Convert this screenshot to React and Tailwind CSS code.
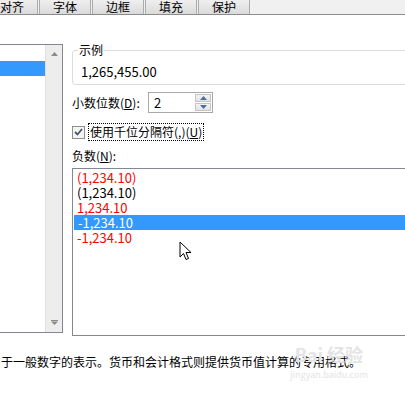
import React from "react";

const tabs = ["对齐", "字体", "边框", "填充", "保护"];

const negatives = [
  { text: "(1,234.10)", color: "text-[#ff0000]" },
  { text: "(1,234.10)", color: "text-black" },
  { text: "1,234.10", color: "text-[#ff0000]" },
  { text: "-1,234.10", color: "text-white", selected: true },
  { text: "-1,234.10", color: "text-[#ff0000]" },
];

function Cursor() {
  return (
    <svg
      className="absolute left-[179px] top-[241px]"
      width="14"
      height="21"
      viewBox="0 0 14 21"
    >
      <path
        d="M1 1 L1 16 L4.5 12.5 L7 18.5 L9.5 17.5 L7 11.5 L12 11.5 Z"
        fill="#fff"
        stroke="#000"
        strokeWidth="1"
        strokeLinejoin="miter"
      />
    </svg>
  );
}

function SpinBox() {
  return (
    <div className="flex h-[21px] w-[65px] items-center border border-[#a8a8a8] bg-white">
      <span className="flex-1 pl-[5px] text-[13px] leading-none">2</span>
      <div className="mr-[1px] flex h-[17px] w-[16px] flex-col gap-[1px]">
        <div className="flex flex-1 items-center justify-center border border-[#c4c4c4] bg-gradient-to-b from-[#f4f4f4] to-[#e4e4e4]">
          <svg width="7" height="4" viewBox="0 0 7 4">
            <path d="M0 4 L3.5 0 L7 4 Z" fill="#4a6f9c" />
          </svg>
        </div>
        <div className="flex flex-1 items-center justify-center border border-[#c4c4c4] bg-gradient-to-b from-[#f4f4f4] to-[#e4e4e4]">
          <svg width="7" height="4" viewBox="0 0 7 4">
            <path d="M0 0 L7 0 L3.5 4 Z" fill="#4a6f9c" />
          </svg>
        </div>
      </div>
    </div>
  );
}

export default function App() {
  return (
    <div
      className="relative h-[397px] w-[405px] overflow-hidden bg-white text-[12px] text-black"
      style={{ fontFamily: '"Noto Sans CJK SC", "Noto Sans", sans-serif' }}
    >
      {/* tab strip */}
      <div className="flex h-[15px] border-b border-[#8c8c8c] bg-[#f0f0f0]">
        {tabs.map((tab, i) => (
          <div
            key={tab}
            className={[
              "flex h-[14px] w-[52px] shrink-0 items-center justify-center border-x border-[#acacac] bg-gradient-to-b from-[#efefef] to-[#dadada] leading-none",
              i === 0 ? "-ml-[14px]" : "ml-[1px]",
            ].join(" ")}
          >
            {tab}
          </div>
        ))}
      </div>

      <div className="mt-[29px] flex">
        {/* left category list */}
        <div className="flex h-[289px] w-[63px] shrink-0 border-y border-r border-[#828790] bg-white">
          <div className="flex-1 pt-[16px]">
            <div className="h-[15px] bg-[#3399ff]" />
          </div>
          <div className="flex w-[17px] flex-col justify-between border-l border-[#e0e0e0] bg-[#ededed] py-[7px]">
            <svg className="mx-auto" width="7" height="4" viewBox="0 0 7 4">
              <path d="M0 4 L3.5 0 L7 4 Z" fill="#8a8a8a" />
            </svg>
            <svg className="mx-auto" width="7" height="5" viewBox="0 0 7 5">
              <rect x="0" y="0" width="7" height="1" fill="#8a8a8a" />
              <path d="M0 1.5 L7 1.5 L3.5 5 Z" fill="#8a8a8a" />
            </svg>
          </div>
        </div>

        {/* right pane */}
        <div className="ml-[9px] flex w-[340px] shrink-0 flex-col">
          <fieldset className="h-[41px] rounded-[3px] border border-[#dcdcdc] px-[8px]">
            <legend className="ml-[-3px] px-[1px] leading-[12px]">示例</legend>
            <div className="mt-[9px] text-[13px] leading-none">1,265,455.00</div>
          </fieldset>

          <div className="mt-[7px] flex items-center">
            <span className="w-[76px] leading-none">
              小数位数(<span className="underline">D</span>):
            </span>
            <SpinBox />
          </div>

          <div className="mt-[10px] flex items-center">
            <div className="flex h-[13px] w-[13px] items-center justify-center border border-[#8f8f8f] bg-[#f4f4f4]">
              <svg width="9" height="8" viewBox="0 0 9 8">
                <path
                  d="M1 4 L3.5 6.5 L8 1"
                  fill="none"
                  stroke="#4d5566"
                  strokeWidth="1.8"
                />
              </svg>
            </div>
            <span className="ml-[3px] flex h-[18px] items-center border border-dotted border-black px-[1px] leading-none">
              使用千位分隔符(,)(<span className="underline">U</span>)
            </span>
          </div>

          <div className="mt-[9px] leading-none">
            负数(<span className="underline">N</span>):
          </div>

          <div className="mt-[6px] h-[168px] border border-[#828790] bg-white pt-[1px]">
            {negatives.map((row, i) => (
              <div
                key={i}
                className={[
                  "flex h-[15px] items-center pl-[4px] text-[13px] leading-none",
                  row.color,
                  row.selected ? "ml-[1px] bg-[#3399ff]" : "",
                ].join(" ")}
              >
                {row.text}
              </div>
            ))}
          </div>
        </div>
      </div>

      <p className="mt-[20px] whitespace-nowrap pl-[1px] leading-none">
        于一般数字的表示。货币和会计格式则提供货币值计算的专用格式。
      </p>

      {/* watermark */}
      <div className="pointer-events-none absolute left-[290px] top-[345px] flex flex-col items-center text-[#e4e4e4]">
        <span className="text-[18px] font-bold leading-none">Bai 经验</span>
        <span className="mt-[7px] text-[9px] leading-none">jingyan.baidu.com</span>
      </div>

      <Cursor />
    </div>
  );
}
